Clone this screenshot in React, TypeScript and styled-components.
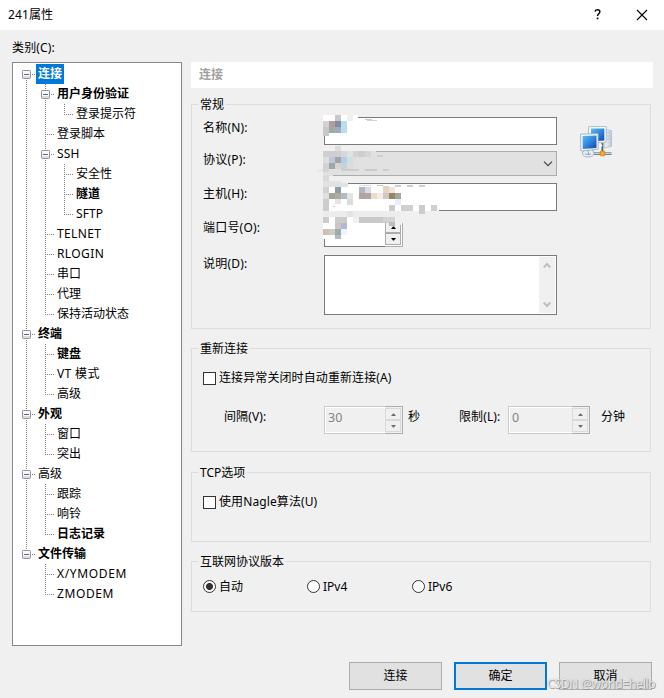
import React from 'react';
import styled, { createGlobalStyle, css } from 'styled-components';

const Global = createGlobalStyle`
  * { box-sizing: border-box; }
  html, body { margin: 0; padding: 0; }
  body {
    background: #f0f0f0;
    color: #000;
    font: 12px/16px "Noto Sans", "Noto Sans CJK SC", sans-serif;
    overflow: hidden;
  }
`;

const Window = styled.div`
  position: relative;
  width: 664px;
  height: 698px;
  display: flex;
  flex-direction: column;
  background: #f0f0f0;
  white-space: nowrap;
`;

const TitleBar = styled.header`
  height: 30px;
  flex: none;
  display: flex;
  align-items: center;
  padding: 0 16px 0 8px;
  background: #fff;
`;

const Title = styled.div`
  flex: 1;
  letter-spacing: 0.1px;
`;

const TitleIcon = styled.svg`
  display: block;
  margin-left: 35px;
  margin-top: -1px;
`;

const Main = styled.main`
  display: flex;
  padding: 10px 11px 0 12px;
  height: 616px;
`;

const Sidebar = styled.section`
  width: 170px;
  display: flex;
  flex-direction: column;
`;

const SidebarLabel = styled.div`
  height: 22px;
  letter-spacing: 0.15px;
`;

const Tree = styled.div`
  flex: 1;
  border: 1px solid #828790;
  background: #fff;
  padding: 1px 0 0 4px;
`;

const TreeRow = styled.div`
  display: flex;
  height: 20px;
`;

type Guide = 'none' | 'pass' | 'tee' | 'end' | 'start';

const vDots = 'repeating-linear-gradient(to bottom, #808080 0 1px, transparent 1px 2px)';
const hDots = 'repeating-linear-gradient(to right, #808080 0 1px, transparent 1px 2px)';

const guides: Record<Guide, ReturnType<typeof css>> = {
  none: css``,
  pass: css`background: ${vDots} 9px 0 / 1px 20px no-repeat;`,
  tee: css`background: ${vDots} 9px 0 / 1px 20px no-repeat, ${hDots} 9px 10px / 9px 1px no-repeat;`,
  end: css`background: ${vDots} 9px 0 / 1px 10px no-repeat, ${hDots} 9px 10px / 9px 1px no-repeat;`,
  start: css`background: ${vDots} 9px 10px / 1px 10px no-repeat, ${hDots} 9px 10px / 9px 1px no-repeat;`,
};

const GuideCell = styled.span<{ $guide: Guide }>`
  width: 19px;
  height: 20px;
  padding: 6px 5px;
  ${p => guides[p.$guide]}
`;

const Expander = styled.svg`
  display: block;
`;

const TreeLabel = styled.span<{ $bold?: boolean; $selected?: boolean; $spacing?: number }>`
  padding: 2px 2px 0;
  font-weight: ${p => (p.$bold ? 700 : 400)};
  letter-spacing: ${p => p.$spacing ?? 0}px;
  ${p => p.$selected && css`background: #0078d7; color: #fff;`}
`;

const Panel = styled.section`
  width: 462px;
  margin: 22px 0 0 9px;
`;

const PanelHeader = styled.div`
  height: 26px;
  padding: 5px 8px;
  background: #fff;
  color: #a0a0a0;
  font-weight: 700;
`;

const Group = styled.section<{ $height: number; $gap: number }>`
  width: 460px;
  height: ${p => p.$height}px;
  margin-top: ${p => p.$gap}px;
  border: 1px solid #dcdcdc;
`;

const Legend = styled.div`
  width: fit-content;
  height: 16px;
  margin: -8px 0 -1px 6px;
  padding: 0 2px;
  background: #f0f0f0;
`;

const GeneralBody = styled.div`
  position: relative;
  display: flex;
  align-items: flex-start;
  padding: 5px 0 0 11px;
`;

const Fields = styled.div`
  width: 354px;
`;

const FieldRow = styled.div<{ $gap: number }>`
  display: flex;
  align-items: flex-start;
  margin-top: ${p => p.$gap}px;
`;

const FieldLabel = styled.label<{ $top: number }>`
  width: 121px;
  padding-top: ${p => p.$top}px;
  letter-spacing: 0.2px;
`;

const TextBox = styled.div`
  width: 233px;
  height: 28px;
  border: 1px solid #7a7a7a;
  background: #fff;
`;

const Select = styled.div`
  width: 233px;
  height: 25px;
  display: flex;
  align-items: center;
  justify-content: flex-end;
  padding-right: 3px;
  border: 1px solid #adadad;
  background: #e1e1e1;
`;

const TextArea = styled.div`
  width: 233px;
  height: 60px;
  display: flex;
  justify-content: flex-end;
  padding: 1px;
  border: 1px solid #7a7a7a;
  background: #fff;
`;

const ScrollTrack = styled.div`
  width: 16px;
  height: 56px;
  display: flex;
  flex-direction: column;
  justify-content: space-between;
  align-items: center;
  padding: 5px 1px 5px 0;
  background: #f0f0f0;
`;

const SpinRoot = styled.div<{ $width: number; $disabled?: boolean }>`
  width: ${p => p.$width}px;
  height: 28px;
  display: flex;
  color: #838383;
  font-size: 12.5px;
  background: ${p => (p.$disabled ? '#f0f0f0' : '#fff')};
`;

const SpinValue = styled.div<{ $disabled?: boolean }>`
  flex: 1;
  padding: 3px 0 0 3px;
  border: 1px solid ${p => (p.$disabled ? '#cccccc' : '#7a7a7a')};
  border-right: 0;
  box-shadow: ${p => (p.$disabled ? 'inset 1px 0 #fff, inset 0 -1px #fff, inset 0 1px #fff' : 'none')};
`;

const SpinButtons = styled.div`
  width: 18px;
  display: flex;
  flex-direction: column;
  padding: 1px 1px 1px 0;
  border: 1px solid #abadb3;
  border-left: 0;
`;

const SpinButton = styled.div<{ $disabled?: boolean }>`
  flex: 1;
  width: 16px;
  display: grid;
  place-items: center;
  background: #f0f0f0;
  border: 1px solid ${p => (p.$disabled ? '#d9d9d9' : '#acacac')};
`;

const ConnectionIcon = styled.svg`
  display: block;
  margin: 9px 0 0 23px;
`;

const Redaction = styled.svg`
  position: absolute;
  left: 124px;
  top: -1px;
`;

const CheckRow = styled.label<{ $top: number }>`
  display: flex;
  align-items: center;
  height: 16px;
  margin: ${p => p.$top}px 0 0 11px;
  letter-spacing: 0.1px;
`;

const CheckBox = styled.span`
  width: 13px;
  height: 13px;
  margin-right: 3px;
  border: 1px solid #333;
  background: #fff;
`;

const IntervalRow = styled.div`
  display: flex;
  margin: 20px 0 0 32px;
`;

const IntervalLabel = styled.span<{ $width: number; $indent?: number }>`
  width: ${p => p.$width}px;
  padding: 3px 0 0 ${p => p.$indent ?? 0}px;
  letter-spacing: 0.1px;
`;

const RadioRow = styled.div`
  display: grid;
  grid-template-columns: 104px 105px auto;
  margin: 9px 0 0 11px;
`;

const RadioOption = styled.label`
  display: flex;
  align-items: center;
  gap: 3px;
  height: 16px;
`;

const RadioText = styled.span`
  padding-top: 2px;
`;

const RadioMark = styled.span<{ $checked?: boolean }>`
  width: 13px;
  height: 13px;
  border: 1px solid #333;
  border-radius: 50%;
  background: ${p => (p.$checked ? 'radial-gradient(circle, #333 3.1px, #fff 3.9px)' : '#fff')};
`;

const Footer = styled.footer`
  display: flex;
  justify-content: flex-end;
  gap: 12px;
  padding: 16px 12px 0 0;
`;

const Button = styled.button<{ $primary?: boolean }>`
  width: 93px;
  height: 28px;
  padding: 0;
  border: ${p => (p.$primary ? '2px solid #0078d7' : '1px solid #adadad')};
  background: #e1e1e1;
  color: #000;
  font: inherit;
`;

const Watermark = styled.div`
  position: absolute;
  left: 547px;
  top: 676px;
  color: rgba(245, 245, 245, 0.85);
  font: 12px/16px "Noto Sans", sans-serif;
  letter-spacing: -0.25px;
  text-shadow: 1px 1px 0 rgba(120, 120, 120, 0.6), 0 0 1px rgba(120, 120, 120, 0.7);
`;

interface Node {
  label: string;
  guides: Guide[];
  open?: boolean;
  bold?: boolean;
  selected?: boolean;
  spacing?: number;
}

const nodes: Node[] = [
  { label: '连接', guides: ['start'], open: true, bold: true, selected: true },
  { label: '用户身份验证', guides: ['pass', 'tee'], open: true, bold: true },
  { label: '登录提示符', guides: ['pass', 'pass', 'end'] },
  { label: '登录脚本', guides: ['pass', 'tee'] },
  { label: 'SSH', guides: ['pass', 'tee'], open: true, spacing: 0.2 },
  { label: '安全性', guides: ['pass', 'pass', 'tee'] },
  { label: '隧道', guides: ['pass', 'pass', 'tee'], bold: true },
  { label: 'SFTP', guides: ['pass', 'pass', 'end'], spacing: 0.1 },
  { label: 'TELNET', guides: ['pass', 'tee'], spacing: 0.35 },
  { label: 'RLOGIN', guides: ['pass', 'tee'], spacing: 0.4 },
  { label: '串口', guides: ['pass', 'tee'] },
  { label: '代理', guides: ['pass', 'tee'] },
  { label: '保持活动状态', guides: ['pass', 'end'] },
  { label: '终端', guides: ['tee'], open: true, bold: true },
  { label: '键盘', guides: ['pass', 'tee'], bold: true },
  { label: 'VT 模式', guides: ['pass', 'tee'], spacing: 0.35 },
  { label: '高级', guides: ['pass', 'end'] },
  { label: '外观', guides: ['tee'], open: true, bold: true },
  { label: '窗口', guides: ['pass', 'tee'] },
  { label: '突出', guides: ['pass', 'end'] },
  { label: '高级', guides: ['tee'], open: true },
  { label: '跟踪', guides: ['pass', 'tee'] },
  { label: '响铃', guides: ['pass', 'tee'] },
  { label: '日志记录', guides: ['pass', 'end'], bold: true },
  { label: '文件传输', guides: ['end'], open: true, bold: true },
  { label: 'X/YMODEM', guides: ['none', 'tee'], spacing: 0.65 },
  { label: 'ZMODEM', guides: ['none', 'end'], spacing: 0.6 },
];

const Minus = () => (
  <Expander width="9" height="9" viewBox="0 0 9 9">
    <rect x="0.5" y="0.5" width="8" height="8" rx="0.8" fill="#fafafa" stroke="#919191" />
    <path d="M1 6.5h7M1 7.5h7" stroke="#dedede" />
    <path d="M2 4.5h5" stroke="#4b63a7" />
  </Expander>
);

const Spinner = ({ width, value, disabled }: { width: number; value?: string; disabled?: boolean }) => {
  const fill = disabled ? '#6d6d6d' : '#000';
  return (
    <SpinRoot $width={width} $disabled={disabled}>
      <SpinValue $disabled={disabled}>{value}</SpinValue>
      <SpinButtons>
        <SpinButton $disabled={disabled}>
          <svg width="5" height="3" viewBox="0 0 5 3"><path d="M0 3L2 0.5h1L5 3z" fill={fill} /></svg>
        </SpinButton>
        <SpinButton $disabled={disabled}>
          <svg width="5" height="3" viewBox="0 0 5 3"><path d="M0 0h5L3 2.5H2z" fill={fill} /></svg>
        </SpinButton>
      </SpinButtons>
    </SpinRoot>
  );
};

// Each block: x, y, width, height, colour, in window coordinates.
type Block = [number, number, number, number, string];
const blocks: Block[] = [
  // name
  [323, 115, 35, 21, '#ffffff'], [335, 115, 6, 6, '#c8c8c8'], [347, 115, 6, 6, '#f0f0f0'],
  [323, 121, 6, 6, '#d2d2d2'], [329, 121, 6, 6, '#b9989e'], [335, 121, 6, 6, '#7f8fa3'], [341, 121, 6, 12, '#bcdcf4'],
  [323, 127, 6, 9, '#c8c8c8'], [329, 127, 6, 6, '#9caaaa'], [335, 127, 6, 6, '#a3acb4'], [329, 133, 6, 3, '#ffffff'],
  [365, 119, 7, 1, '#c8c8c8'], [367, 120, 10, 1, '#d2d2d2'],
  // protocol
  [335, 146, 6, 5, '#dcdcdc'], [323, 151, 53, 6, '#e1e1e1'], [323, 151, 18, 6, '#cfcfcf'], [341, 151, 6, 6, '#d7d7d7'],
  [353, 151, 6, 6, '#d2d2d2'], [359, 151, 6, 6, '#cdcdcd'], [365, 151, 6, 6, '#d6d6d6'], [377, 155, 6, 2, '#d0d0d0'],
  [323, 157, 6, 6, '#dedede'], [329, 157, 6, 6, '#bfc9d5'], [335, 157, 6, 6, '#9fa4ae'], [341, 157, 6, 6, '#b6cce6'], [347, 157, 6, 6, '#cbe2e2'],
  [323, 163, 6, 6, '#d2d2d2'], [329, 163, 6, 6, '#9fa4af'], [335, 163, 6, 6, '#dad5cb'], [341, 163, 6, 6, '#c0d2e4'], [347, 163, 6, 6, '#e0dbd5'],
  [317, 169, 12, 3, '#e8e8e8'], [323, 169, 6, 3, '#d3d3d3'], [341, 169, 18, 2, '#cccccc'], [365, 169, 12, 2, '#cbcbcb'], [383, 169, 6, 2, '#cecece'],
  [323, 172, 10, 4, '#e1e1e1'], [323, 175, 6, 6, '#dadada'],
  // host
  [323, 183, 25, 4, '#e2e2e2'], [323, 181, 18, 3, '#e2e2e2'], [323, 187, 18, 24, '#ffffff'],
  [359, 185, 12, 1, '#e0e0e0'], [377, 185, 6, 1, '#c8c8c8'], [395, 185, 6, 2, '#cfcfcf'], [407, 185, 6, 2, '#cccccc'], [419, 185, 6, 2, '#cfcfcf'],
  [323, 187, 6, 6, '#d2d2d2'], [329, 187, 6, 6, '#fffff5'], [335, 187, 6, 6, '#9299a8'],
  [359, 187, 6, 6, '#b1b7c2'], [365, 187, 6, 6, '#dadae3'], [383, 186, 6, 7, '#e0d3c8'], [389, 187, 6, 6, '#efe3da'],
  [323, 193, 6, 6, '#dfe0da'], [329, 193, 6, 6, '#a3a59b'], [335, 193, 6, 6, '#b0ab9f'], [341, 193, 6, 6, '#b0bac0'], [347, 193, 6, 6, '#e0e6e7'],
  [359, 193, 6, 6, '#b3a29e'], [365, 193, 6, 6, '#b2a5a4'], [371, 193, 6, 6, '#ecdcca'], [377, 193, 6, 6, '#f5ece2'],
  [383, 193, 6, 6, '#d2c8c5'], [389, 193, 6, 6, '#968467'], [395, 193, 6, 6, '#a3a69c'],
  [323, 199, 6, 12, '#cccccc'], [335, 199, 6, 5, '#e8e3e1'], [333, 206, 2, 1, '#cccccc'], [347, 199, 6, 6, '#dcdcdf'], [395, 199, 6, 6, '#e4f1fd'],
  [329, 210, 110, 1, '#ffffff'], [389, 205, 6, 6, '#cccccc'], [401, 205, 12, 6, '#d0d0d0'], [419, 205, 6, 9, '#cccccc'], [431, 205, 6, 6, '#cfcfcf'],
  [323, 211, 77, 6, '#ececec'], [347, 211, 6, 6, '#e3e3e3'],
  // port
  [323, 217, 80, 6, '#f0f0f0'], [323, 217, 30, 6, '#ffffff'], [323, 217, 6, 6, '#cccccc'], [335, 217, 12, 6, '#cccccc'],
  [359, 217, 30, 6, '#c9c9c9'], [383, 217, 12, 5, '#d4d4d4'], [323, 223, 30, 16, '#ffffff'], [386, 223, 15, 2, '#f0f0f0'],
  [335, 223, 6, 6, '#d0c6c0'], [341, 223, 6, 6, '#acb9d8'], [389, 222, 6, 4, '#bbbdb9'],
  [323, 229, 6, 6, '#cfbeb8'], [329, 229, 6, 6, '#cdccc0'], [335, 229, 6, 6, '#a0aaa8'], [341, 229, 6, 6, '#ebf5ff'], [335, 235, 6, 4, '#b1bac6'],
];

const Mosaic = () => (
  <Redaction width="124" height="130" viewBox="316 111 124 130" shapeRendering="crispEdges">
    {blocks.map(([x, y, w, h, fill], i) => (
      <rect key={i} x={x} y={y} width={w} height={h} fill={fill} />
    ))}
  </Redaction>
);

const NetworkIcon = () => (
  <ConnectionIcon width="32" height="32" viewBox="0 0 32 32">
    <defs>
      <linearGradient id="screen" x1="0" y1="0" x2="1" y2="1">
        <stop offset="0" stopColor="#5cc0f4" />
        <stop offset="0.5" stopColor="#2f86dc" />
        <stop offset="1" stopColor="#1740a8" />
      </linearGradient>
      <linearGradient id="tower" x1="0" y1="0" x2="1" y2="0">
        <stop offset="0" stopColor="#f6fafc" />
        <stop offset="1" stopColor="#b9cad6" />
      </linearGradient>
    </defs>
    <path d="M26 3.500l5.500 1.200v15.500l-7 2z" fill="url(#tower)" stroke="#a7bac7" strokeWidth="0.7" />
    <path d="M27 7h3M27 10h3M27 13h3" stroke="#9fb3c2" strokeWidth="0.7" />
    <path d="M8.500 0.700l17.700-.3v15.800l-17.700.8z" fill="#f4f9fb" stroke="#9eb2bd" strokeWidth="0.8" />
    <path d="M11 2.600h13.300v11.800l-13.300 1z" fill="url(#screen)" />
    <path d="M13 27.600h18.500" stroke="#6f8795" strokeWidth="2.800" />
    <path d="M13 27.400h18.500" stroke="#c3d3da" strokeWidth="1.200" />
    <path d="M22.400 17v9" stroke="#54707e" strokeWidth="2" />
    <path d="M17 22l5-3" stroke="#fff" strokeWidth="2" />
    <path d="M2.600 26c-.5 3 1.500 5 5 5 4 0 6.800-1.500 6.200-4.500l-1.500-3H6z" fill="#e6eef1" stroke="#93a8b4" strokeWidth="0.8" />
    <path d="M8 24l.5 4M5 27.500c1 1.500 5 1.500 6 0" stroke="#8fa6b5" fill="none" />
    <path d="M0.500 8.200l17.600-.6v15.600L0.900 25z" fill="#f6fafb" stroke="#91a7b4" strokeWidth="0.8" />
    <path d="M2.500 10l14-.4v12.300l-13.700 1.100z" fill="url(#screen)" />
    <rect x="20.200" y="25.200" width="4.600" height="4.600" rx="0.700" fill="#ffa51f" stroke="#c87914" strokeWidth="0.7" />
  </ConnectionIcon>
);

export default function App() {
  return (
    <>
      <Global />
      <Window>
        <TitleBar>
          <Title>241属性</Title>
          <TitleIcon width="7" height="11" viewBox="0 0 7 11">
            <path d="M1 2.700C1.200 1.300 2.200.8 3.400.8c1.500 0 2.500.8 2.500 2 0 1.900-2.400 2-2.400 4.200" fill="none" stroke="#000" strokeWidth="1.400" />
            <rect x="2.700" y="8.600" width="1.700" height="1.700" fill="#000" />
          </TitleIcon>
          <TitleIcon width="12" height="12" viewBox="0 0 12 12">
            <path d="M1 1l10 10M11 1L1 11" stroke="#000" strokeWidth="1.100" />
          </TitleIcon>
        </TitleBar>
        <Main>
          <Sidebar>
            <SidebarLabel>类别(C):</SidebarLabel>
            <Tree>
              {nodes.map((node, i) => (
                <TreeRow key={i}>
                  {node.guides.map((guide, depth) => (
                    <GuideCell key={depth} $guide={guide}>
                      {node.open && depth === node.guides.length - 1 && <Minus />}
                    </GuideCell>
                  ))}
                  <TreeLabel $bold={node.bold} $selected={node.selected} $spacing={node.spacing}>
                    {node.label}
                  </TreeLabel>
                </TreeRow>
              ))}
            </Tree>
          </Sidebar>
          <Panel>
            <PanelHeader>连接</PanelHeader>
            <Group $height={225} $gap={16}>
              <Legend>常规</Legend>
              <GeneralBody>
                <Fields>
                  <FieldRow $gap={0}>
                    <FieldLabel $top={3}>名称(N):</FieldLabel>
                    <TextBox />
                  </FieldRow>
                  <FieldRow $gap={6}>
                    <FieldLabel $top={1}>协议(P):</FieldLabel>
                    <Select>
                      <svg width="10" height="6" viewBox="0 0 10 6">
                        <path d="M1 0.700l4 4 4-4" fill="none" stroke="#444" strokeWidth="1.200" />
                      </svg>
                    </Select>
                  </FieldRow>
                  <FieldRow $gap={7}>
                    <FieldLabel $top={3}>主机(H):</FieldLabel>
                    <TextBox />
                  </FieldRow>
                  <FieldRow $gap={8}>
                    <FieldLabel $top={1}>端口号(O):</FieldLabel>
                    <Spinner width={79} />
                  </FieldRow>
                  <FieldRow $gap={8}>
                    <FieldLabel $top={1}>说明(D):</FieldLabel>
                    <TextArea>
                      <ScrollTrack>
                        <svg width="8" height="7" viewBox="0 0 8 7">
                          <path d="M0.700 5.500L4 2l3.300 3.500" fill="none" stroke="#bfbfbf" strokeWidth="2" />
                        </svg>
                        <svg width="8" height="7" viewBox="0 0 8 7">
                          <path d="M0.700 1.500L4 5l3.300-3.500" fill="none" stroke="#bfbfbf" strokeWidth="2" />
                        </svg>
                      </ScrollTrack>
                    </TextArea>
                  </FieldRow>
                </Fields>
                <NetworkIcon />
                <Mosaic />
              </GeneralBody>
            </Group>
            <Group $height={104} $gap={19}>
              <Legend>重新连接</Legend>
              <CheckRow $top={14}><CheckBox />连接异常关闭时自动重新连接(A)</CheckRow>
              <IntervalRow>
                <IntervalLabel $width={100}>间隔(V):</IntervalLabel>
                <Spinner width={79} value="30" disabled />
                <IntervalLabel $width={56} $indent={5}>秒</IntervalLabel>
                <IntervalLabel $width={49}>限制(L):</IntervalLabel>
                <Spinner width={82} value="0" disabled />
                <IntervalLabel $width={40} $indent={11}>分钟</IntervalLabel>
              </IntervalRow>
            </Group>
            <Group $height={70} $gap={20}>
              <Legend>TCP选项</Legend>
              <CheckRow $top={14}><CheckBox />使用Nagle算法(U)</CheckRow>
            </Group>
            <Group $height={51} $gap={19}>
              <Legend>互联网协议版本</Legend>
              <RadioRow>
                <RadioOption><RadioMark $checked /><RadioText>自动</RadioText></RadioOption>
                <RadioOption><RadioMark /><RadioText>IPv4</RadioText></RadioOption>
                <RadioOption><RadioMark /><RadioText>IPv6</RadioText></RadioOption>
              </RadioRow>
            </Group>
          </Panel>
        </Main>
        <Footer>
          <Button>连接</Button>
          <Button $primary>确定</Button>
          <Button>取消</Button>
        </Footer>
        <Watermark>CSDN @world=hello</Watermark>
      </Window>
    </>
  );
}
